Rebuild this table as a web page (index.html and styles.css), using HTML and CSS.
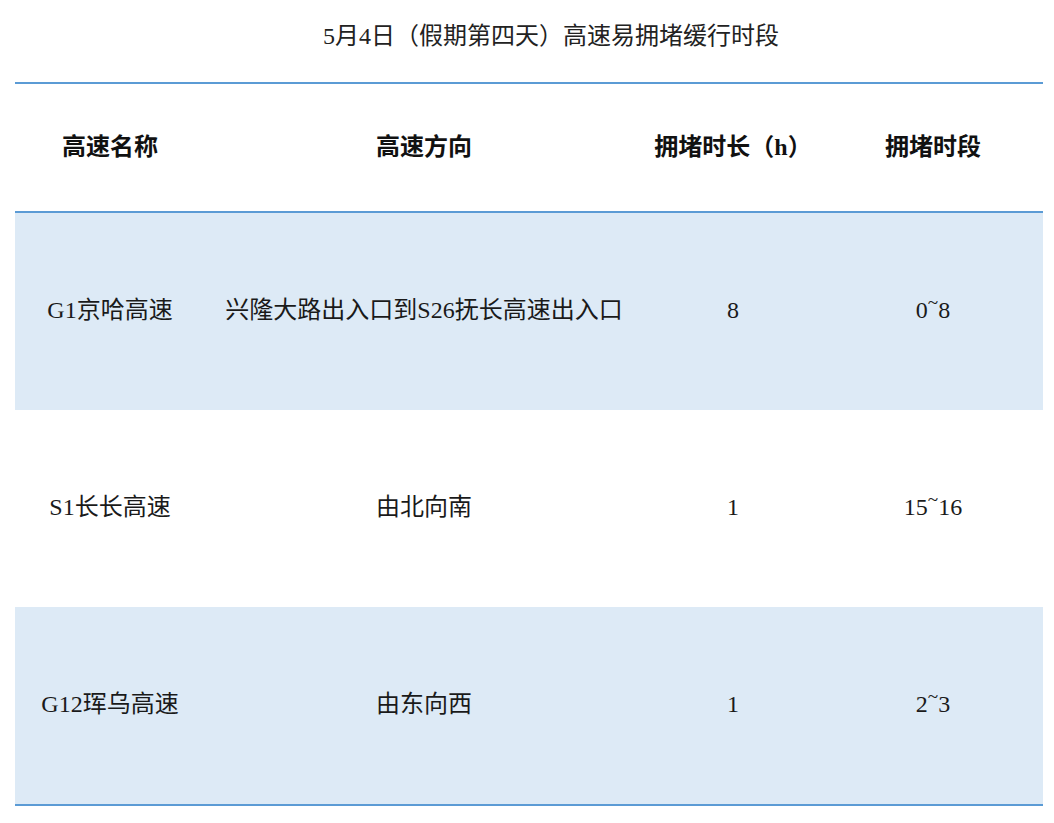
FILE: index.html
```html
<!DOCTYPE html>
<html lang="zh-CN">
<head>
<meta charset="utf-8">
<title>5月4日高速易拥堵缓行时段</title>
<link rel="stylesheet" href="styles.css">
</head>
<body>
<div class="page">
  <h1 class="title">5月4日（假期第四天）高速易拥堵缓行时段</h1>
  <table class="jam">
    <colgroup>
      <col class="c1"><col class="c2"><col class="c3"><col class="c4">
    </colgroup>
    <thead>
      <tr>
        <th>高速名称</th>
        <th>高速方向</th>
        <th>拥堵时长（h）</th>
        <th>拥堵时段</th>
      </tr>
    </thead>
    <tbody>
      <tr class="band">
        <td>G1京哈高速</td>
        <td>兴隆大路出入口到S26抚长高速出入口</td>
        <td>8</td>
        <td>0<span class="tl">~</span>8</td>
      </tr>
      <tr>
        <td>S1长长高速</td>
        <td>由北向南</td>
        <td>1</td>
        <td>15<span class="tl">~</span>16</td>
      </tr>
      <tr class="band">
        <td>G12珲乌高速</td>
        <td>由东向西</td>
        <td>1</td>
        <td>2<span class="tl">~</span>3</td>
      </tr>
    </tbody>
  </table>
</div>
</body>
</html>
```

FILE: styles.css
```css
html, body {
  margin: 0;
  padding: 0;
  background: #ffffff;
}

body {
  font-family: "Liberation Serif", "Noto Sans CJK SC", serif;
  color: #1a1a1a;
}

.page {
  padding: 0 11px 0 15px;
}

.title {
  margin: 0;
  height: 82px;
  box-sizing: border-box;
  padding: 20px 0 0 44px;
  font-size: 24px;
  font-weight: normal;
  line-height: 32px;
  text-align: center;
  color: #222;
}

.jam {
  width: 1028px;
  border-collapse: collapse;
  table-layout: fixed;
  border-top: 2px solid #5b9bd5;
  border-bottom: 2px solid #5b9bd5;
}

.c1 { width: 190px; }
.c2 { width: 438px; }
.c3 { width: 180px; }
.c4 { width: 220px; }

.jam th {
  height: 125px;
  padding: 0 0 2px;
  font-size: 24px;
  line-height: 32px;
  font-weight: bold;
  text-align: center;
  vertical-align: middle;
  border-bottom: 2px solid #5b9bd5;
  color: #111;
}

.jam td {
  height: 193px;
  padding: 0 0 4px;
  font-size: 24px;
  line-height: 32px;
  text-align: center;
  vertical-align: middle;
  white-space: nowrap;
}

.jam tr.band td {
  background: #ddeaf6;
}

.tl {
  display: inline-block;
  vertical-align: 0.45em;
  font-size: 0.8em;
  line-height: 1;
}
```
